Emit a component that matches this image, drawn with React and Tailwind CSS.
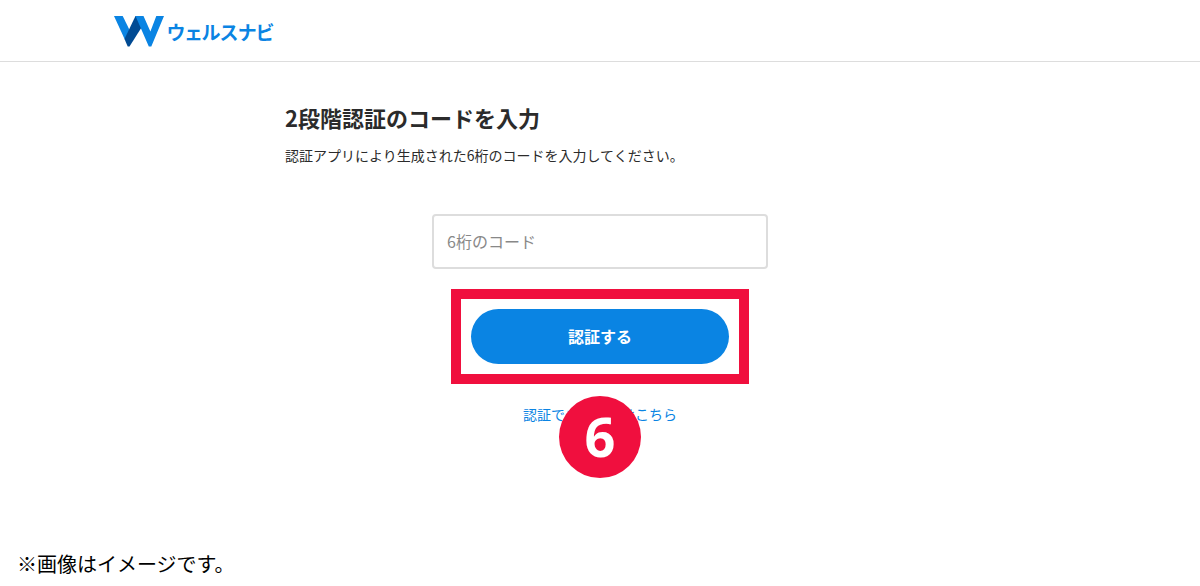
import { useState } from 'react'

const LogoMark = () => (
  <svg viewBox="0 0 50 31" className="w-[50px] h-[31px]" aria-hidden="true">
    <path d="M0 0h8.700L16.300 15.500 10.800 23.500z" fill="#0a84e3" />
    <path d="M21.500 0h4l2 11.500L15.500 30.600h-1.800L10.500 23z" fill="#004a93" />
    <path d="M21.500 0h8l6.900 15.500L42.300 0H50L37.300 30.600h-2.500z" fill="#0a84e3" />
  </svg>
)

const Header = () => (
  <header className="border-b border-[#dddddd]">
    <div className="max-w-[972px] mx-auto h-[61px] flex items-center pt-0.5">
      <a href="#" className="flex items-center gap-[3px] text-[#0a84e3]">
        <LogoMark />
        <span className="text-[19px] font-bold leading-6 [font-feature-settings:'palt']">ウェルスナビ</span>
      </a>
    </div>
  </header>
)

const StepBadge = ({ number }) => (
  <span className="absolute left-1/2 -translate-x-1/2 -top-2 size-[82px] rounded-full bg-[#f00f3e] text-white flex items-center justify-center font-['Noto_Sans'] font-bold text-[54px] leading-none pb-0.5">
    {number}
  </span>
)

const CodeForm = () => {
  const [code, setCode] = useState('')

  return (
    <form className="mt-[49px] flex flex-col items-center" onSubmit={(e) => e.preventDefault()}>
      <input
        type="text"
        inputMode="numeric"
        maxLength={6}
        value={code}
        onChange={(e) => setCode(e.target.value)}
        placeholder="6桁のコード"
        aria-label="6桁のコード"
        className="w-full max-w-[336px] h-[55px] px-[13px] pb-0.5 border-2 border-[#dddddd] rounded text-base placeholder:text-[#888888]"
      />
      <div className="mt-5 w-full max-w-[298px] border-10 border-[#f00f3e] p-2.5">
        <button type="submit" className="w-full h-[55px] pb-0.5 rounded-full bg-[#0a84e3] text-white text-base font-bold">
          認証する
        </button>
      </div>
      <div className="relative mt-5">
        <a href="#" className="block text-sm leading-5 text-[#0a84e3]">認証できない方はこちら</a>
        <StepBadge number={6} />
      </div>
    </form>
  )
}

const App = () => (
  <div className="min-h-screen flex flex-col bg-white text-[#2b2b2b] font-['Noto_Sans_CJK_JP',sans-serif]">
    <Header />
    <main className="flex-1 w-full max-w-[630px] mx-auto pt-[39px]">
      <h1 className="text-[22px] leading-8 font-bold">2段階認証のコードを入力</h1>
      <p className="mt-3 text-sm leading-5">認証アプリにより生成された6桁のコードを入力してください。</p>
      <CodeForm />
    </main>
    <footer className="px-[17px] pb-2 text-xl leading-7 text-black">※画像はイメージです。</footer>
  </div>
)

export default App
